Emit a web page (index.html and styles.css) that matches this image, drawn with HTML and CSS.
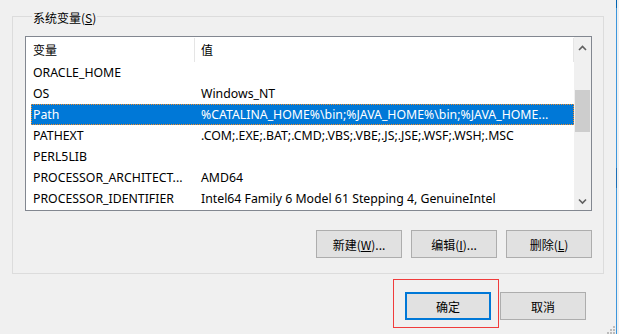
FILE: index.html
```html
<!DOCTYPE html>
<html lang="zh-CN">
<head>
    <meta charset="UTF-8">
    <meta name="viewport" content="width=device-width, initial-scale=1.0">
    <title>系统变量</title>
    <link rel="stylesheet" href="styles.css">
</head>
<body>
    <div class="dialog">
        <fieldset class="group">
            <legend>系统变量(<u>S</u>)</legend>
            <div class="list">
                <div class="list-main">
                    <div class="list-head">
                        <span class="hcell name">变量</span>
                        <span class="hcell value">值</span>
                    </div>
                    <div class="row"><span class="cell name">ORACLE_HOME</span><span class="cell value"></span></div>
                    <div class="row"><span class="cell name">OS</span><span class="cell value">Windows_NT</span></div>
                    <div class="row selected"><span class="cell name">Path</span><span class="cell value">%CATALINA_HOME%\bin;%JAVA_HOME%\bin;%JAVA_HOME...</span></div>
                    <div class="row"><span class="cell name">PATHEXT</span><span class="cell value">.COM;.EXE;.BAT;.CMD;.VBS;.VBE;.JS;.JSE;.WSF;.WSH;.MSC</span></div>
                    <div class="row"><span class="cell name">PERL5LIB</span><span class="cell value"></span></div>
                    <div class="row"><span class="cell name">PROCESSOR_ARCHITECT...</span><span class="cell value">AMD64</span></div>
                    <div class="row"><span class="cell name">PROCESSOR_IDENTIFIER</span><span class="cell value">Intel64 Family 6 Model 61 Stepping 4, GenuineIntel</span></div>
                </div>
                <div class="scrollbar">
                    <svg class="arrow" width="17" height="17" viewBox="0 0 17 17"><path d="M5 11 L8.5 7.5 L12 11" fill="none" stroke="#606060" stroke-width="1.6"/></svg>
                    <div class="track"><div class="thumb"></div></div>
                    <svg class="arrow" width="17" height="17" viewBox="0 0 17 17"><path d="M5 6.5 L8.5 10 L12 6.5" fill="none" stroke="#606060" stroke-width="1.6"/></svg>
                </div>
            </div>
            <div class="actions">
                <button class="btn">新建(<u>W</u>)...</button>
                <button class="btn">编辑(<u>I</u>)...</button>
                <button class="btn">删除(<u>L</u>)</button>
            </div>
        </fieldset>
        <div class="footer">
            <div class="mark">
                <button class="btn default">确定</button>
            </div>
            <button class="btn cancel">取消</button>
        </div>
        <svg class="grip" width="12" height="9" viewBox="0 0 12 9">
            <rect x="9" y="1" width="2" height="2" fill="#bcbcbc"/>
            <rect x="6" y="4" width="2" height="2" fill="#bcbcbc"/>
            <rect x="9" y="4" width="2" height="2" fill="#bcbcbc"/>
            <rect x="3" y="7" width="2" height="2" fill="#bcbcbc"/>
            <rect x="6" y="7" width="2" height="2" fill="#bcbcbc"/>
            <rect x="9" y="7" width="2" height="2" fill="#bcbcbc"/>
        </svg>
    </div>
    <div class="edge"></div>
</body>
</html>
```

FILE: styles.css
```css
/* windows 10 dialog look */
:root {
    --bg-color: #f0f0f0;
    --text-color: #000000;
    --select-color: #0078d7;
    --border-color: #dcdcdc;
    --button-bg: #e1e1e1;
    --button-border: #adadad;
}

body {
    font-family: 'Noto Sans', 'Noto Sans CJK SC', sans-serif;
    font-size: 12px;
    margin: 0px;
    background-color: var(--bg-color);
    color: var(--text-color);
    display: flex;
    width: 619px;
    height: 334px;
    overflow: hidden;
}

u {
    text-decoration: underline;
    text-underline-offset: 1px;
}

.dialog {
    position: relative;
    width: 616px;
    height: 334px;
}

.edge {
    width: 1px;
    height: 334px;
    background: linear-gradient(#0063b1 0 8px, #3c96dc 8px 168px, #1a6fb8 168px 188px, #3c96dc 188px);
}

.group {
    margin: 6px 0 0 12px;
    width: 592px;
    box-sizing: border-box;
    border: 1px solid var(--border-color);
    padding: 10px 11px 16px 12px;
    height: 268px;
}

.group legend {
    padding: 4px 1px 0 1px;
    margin-left: 7px;
    line-height: 16px;
    font-family: 'Noto Sans CJK SC', 'Noto Sans', sans-serif;
}

.list {
    display: flex;
    width: 567px;
    height: 175px;
    box-sizing: border-box;
    border: 1px solid #828790;
    background: #ffffff;
}

.list-main {
    flex: 1;
}

.list-head {
    display: flex;
    height: 25px;
    align-items: center;
}

.hcell {
    height: 24px;
    line-height: 24px;
    font-family: 'Noto Sans CJK SC', 'Noto Sans', sans-serif;
    box-sizing: border-box;
}

.hcell.name {
    width: 169px;
    padding-left: 7px;
    border-right: 1px solid #e5e5e5;
}

.hcell.value {
    flex: 1;
    padding-left: 6px;
    border-right: 1px solid #e5e5e5;
}

.row {
    display: flex;
    height: 21px;
    line-height: 21px;
    margin-left: 5px;
    box-sizing: border-box;
    white-space: nowrap;
    font-size: 12.3px;
}

.row.selected {
    background: var(--select-color);
    color: #ffffff;
    outline: 1px dotted #f28c28;
    outline-offset: -1px;
}

.cell {
    overflow: hidden;
}

.cell.name {
    width: 168px;
    padding-left: 2px;
    box-sizing: border-box;
}

.cell.value {
    flex: 1;
    padding-left: 2px;
}

.scrollbar {
    width: 17px;
    display: flex;
    flex-direction: column;
    background: #f0f0f0;
}

.arrow {
    display: block;
    margin-top: 2px;
}

.track {
    flex: 1;
    padding-top: 34px;
}

.thumb {
    width: 15px;
    margin-left: 1px;
    height: 42px;
    background: #cdcdcd;
}

.actions {
    display: flex;
    justify-content: flex-end;
    gap: 9px;
    margin-top: 19px;
    width: 567px;
}

.btn {
    width: 86px;
    height: 28px;
    font-family: 'Noto Sans CJK SC', 'Noto Sans', sans-serif;
    font-size: 12px;
    color: var(--text-color);
    background: var(--button-bg);
    border: 1px solid var(--button-border);
    border-radius: 0;
    padding: 0;
}

.footer {
    display: flex;
    align-items: flex-start;
    padding-left: 393px;
    margin-top: 5px;
}

.mark {
    border: 1px solid #f03c3c;
    padding: 12px 7px 7px 11px;
}

.btn.default {
    border: 2px solid var(--select-color);
}

.btn.cancel {
    margin-left: 1px;
    margin-top: 13px;
}

.grip {
    position: absolute;
    right: 0;
    bottom: 0;
}
```
